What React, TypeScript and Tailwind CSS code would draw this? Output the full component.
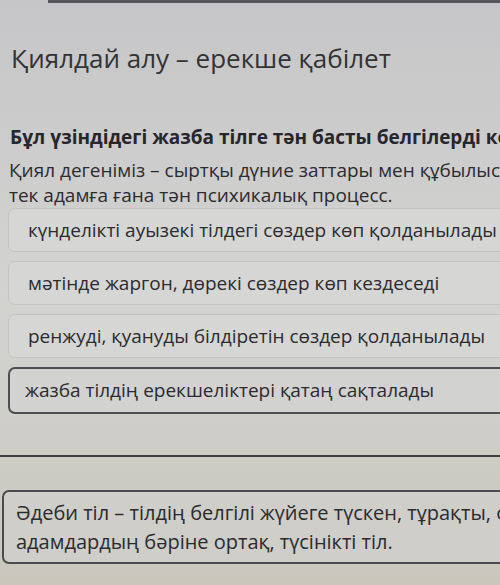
import React from 'react';

const options = [
  { id: 'a', text: 'күнделікті ауызекі тілдегі сөздер көп қолданылады', selected: false },
  { id: 'b', text: 'мәтінде жаргон, дөрекі сөздер көп кездеседі', selected: false },
  { id: 'c', text: 'ренжуді, қуануды білдіретін сөздер қолданылады', selected: false },
  { id: 'd', text: 'жазба тілдің ерекшеліктері қатаң сақталады', selected: true },
];

const App = () => {
  return (
    <div
      className="w-[500px] h-[585px] overflow-hidden bg-gradient-to-b from-[#c6c6c8] via-[#d3d3d1] to-[#c9c7bc] text-[#2b2b30] whitespace-nowrap"
      style={{ fontFamily: '"Open Sans", "Noto Sans", sans-serif' }}
    >
      {/* top edge of the window */}
      <div className="h-[3px] ml-[48px] bg-[#55565a]" />

      <h1 className="mt-[38px] pl-[11px] text-[26px] leading-[34px] text-[#333336]">
        Қиялдай алу – ерекше қабілет
      </h1>

      <p className="mt-[50px] pl-[10px] text-[19px] leading-[24px] font-bold text-[#26262c]">
        Бұл үзіндідегі жазба тілге тән басты белгілерді көрсет
      </p>

      <div className="mt-[9px] pl-[9px] text-[19px] leading-[25px]">
        <div>Қиял дегеніміз – сыртқы дүние заттары мен құбылыстарының бейнесін</div>
        <div>тек адамға ғана тән психикалық процесс.</div>
      </div>

      {/* Options */}
      <div className="ml-[8px] w-[540px] flex flex-col gap-[9px]">
        {options.map((opt) => (
          <div
            key={opt.id}
            className={
              opt.selected
                ? 'h-[47px] flex items-center pl-[15px] rounded-[7px] border-2 border-[#4d4e52] bg-[#d2d2d0] text-[19px]'
                : 'h-[44px] flex items-center pl-[19px] rounded-[7px] border border-[#c2c3c2] bg-[#d6d6d4] text-[19px]'
            }
          >
            {opt.text}
          </div>
        ))}
      </div>

      {/* Divider */}
      <div className="mt-[41px] h-[2px] bg-[#3e3f42]" />

      {/* Answer box */}
      <div className="mt-[33px] ml-[2px] w-[540px] h-[74px] rounded-[7px] border-2 border-[#4a4b4f] bg-[#cfcec8] pl-[12px] pt-[6px] text-[20px] leading-[29px]">
        <div>Әдеби тіл – тілдің белгілі жүйеге түскен, тұрақты, орнықты түрі,</div>
        <div>адамдардың бәріне ортақ, түсінікті тіл.</div>
      </div>
    </div>
  );
};

export default App;
